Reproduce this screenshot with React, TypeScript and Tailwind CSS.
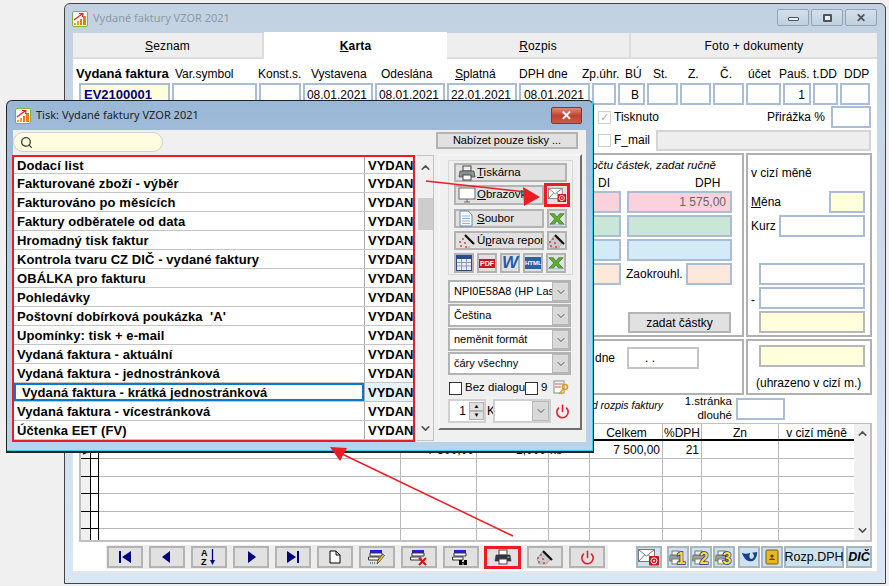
import { ChevronDown, ChevronUp, Power, Search } from 'lucide-react';

const LABELS = [
  { t: 'Var.symbol', w: 'w-[83px]' },
  { t: 'Konst.s.', w: 'w-[53px]' },
  { t: 'Vystavena', w: 'w-[70px]' },
  { t: 'Odeslána', w: 'w-[74px]' },
  { t: 'Splatná', w: 'w-[64px]', u: true },
  { t: 'DPH dne', w: 'w-[63px]' },
  { t: 'Zp.úhr.', w: 'w-[43px]' },
  { t: 'BÚ', w: 'w-[28px]' },
  { t: 'St.', w: 'w-[35px]' },
  { t: 'Z.', w: 'w-[32px]' },
  { t: 'Č.', w: 'w-[28px]' },
  { t: 'účet', w: 'w-[31px]' },
  { t: 'Pauš.', w: 'w-[34px]' },
  { t: 't.DD', w: 'w-[31px]' },
  { t: 'DDP', w: 'w-[30px]' },
];

const HEAD_INPUTS = [
  { w: 'w-[91px]', v: 'EV2100001', c: 'bg-[#ffffdc] text-[#000080] font-bold text-[13px] !justify-start pl-[3px]' },
  { w: 'w-[85px]', v: '' },
  { w: 'w-[42px]', v: '' },
  { w: 'w-[70px]', v: '08.01.2021' },
  { w: 'w-[70px]', v: '08.01.2021' },
  { w: 'w-[70px]', v: '22.01.2021' },
  { w: 'w-[71px]', v: '08.01.2021' },
  { w: 'w-[24px]', v: '' },
  { w: 'w-[27px]', v: 'B' },
  { w: 'w-[31px]', v: '' },
  { w: 'w-[31px]', v: '' },
  { w: 'w-[31px]', v: '' },
  { w: 'w-[35px]', v: '' },
  { w: 'w-[28px]', v: '1' },
  { w: 'w-[25px]', v: '' },
  { w: 'w-[30px]', v: '' },
];

const REPORTS = [
  'Dodací list',
  'Fakturované zboží - výběr',
  'Fakturováno po měsících',
  'Faktury odběratele od data',
  'Hromadný tisk faktur',
  'Kontrola tvaru CZ DIČ - vydané faktury',
  'OBÁLKA pro fakturu',
  'Pohledávky',
  "Poštovní dobírková poukázka  'A'",
  'Upomínky: tisk + e-mail',
  'Vydaná faktura - aktuální',
  'Vydaná faktura - jednostránková',
  'Vydaná faktura - krátká jednostránková',
  'Vydaná faktura - vícestránková',
  'Účtenka EET (FV)',
];

const COLS = ['w-[10px]', 'w-[8px]', 'w-[302px]', 'w-[76px]', 'w-[72px]', 'w-[41px]', 'w-[73px]', 'w-[39px]', 'w-[77px]', 'w-[75px]'];

function Logo() {
  return (
    <svg viewBox="0 0 16 16" className="w-4 h-4 shrink-0">
      <rect x="0.5" y="0.5" width="15" height="15" rx="1.5" fill="#fff" stroke="#7fb13c" />
      <rect x="2" y="12" width="2" height="2" fill="#e8a020" />
      <rect x="5" y="10" width="2" height="4" fill="#e8a020" />
      <rect x="8" y="8" width="2" height="6" fill="#e87a20" />
      <rect x="11" y="5" width="3" height="9" fill="#e87a20" />
      <path d="M2 9 L10 3 M7 2.5 L11 2.5 L10.5 6" stroke="#e02020" strokeWidth="1.2" fill="none" />
    </svg>
  );
}

function PrinterIcon({ dark = false }: { dark?: boolean }) {
  return (
    <svg viewBox="0 0 18 16" className="w-[18px] h-4 shrink-0">
      <rect x="5" y="1" width="8" height="5" fill={dark ? '#fff' : '#eee'} stroke="#444" />
      <path d="M2 6 H16 L17 12 H1 Z" fill={dark ? '#334' : '#8a8f94'} stroke="#333" strokeWidth="0.6" />
      <rect x="5" y="10" width="8" height="5" fill="#fff" stroke="#444" />
      <rect x="13.5" y="7.5" width="2" height="1.5" fill="#5c5" />
    </svg>
  );
}

function NumPrinter({ n }: { n: string }) {
  return (
    <svg viewBox="0 0 18 18" className="w-[18px] h-[18px]">
      <path d="M1 7 H12 L13 13 H0.5 Z" fill="#9a9fa4" stroke="#555" strokeWidth="0.6" />
      <rect x="3" y="3" width="7" height="4" fill="#eee" stroke="#777" />
      <rect x="3" y="11" width="7" height="5" fill="#fff" stroke="#777" />
      <text x="12" y="15.5" textAnchor="middle" fontSize="16" fontWeight="bold" fontFamily="Liberation Sans" fill="#ffe020" stroke="#1a2a90" strokeWidth="1.4" paintOrder="stroke">
        {n}
      </text>
    </svg>
  );
}

function Mail({ w = 'w-[22px]' }: { w?: string }) {
  return (
    <svg viewBox="0 0 22 18" className={w}>
      <rect x="0.5" y="1.5" width="16" height="12" fill="#fff" stroke="#777" />
      <path d="M1 2 L8.5 8 L16 2 M1 13 L6.5 7 M16 13 L10.5 7" stroke="#777" fill="none" />
      <rect x="11" y="8" width="10" height="9.5" rx="1" fill="#c8161c" />
      <circle cx="16" cy="12.8" r="3" fill="none" stroke="#fff" strokeWidth="1" />
      <circle cx="16" cy="12.8" r="1" fill="#fff" />
    </svg>
  );
}

function ExcelX() {
  return (
    <svg viewBox="0 0 18 16" className="w-[18px] h-4">
      <path d="M1 2 H6 L9 6 L12 2 H17 L11.5 8 L17 14 H12 L9 10 L6 14 H1 L6.5 8 Z" fill="#5cae35" stroke="#2c6b1a" strokeWidth="0.7" />
      <path d="M2 14.5 H16" stroke="#9bc" strokeWidth="1" />
    </svg>
  );
}

function Wand({ small = false }: { small?: boolean }) {
  return (
    <svg viewBox="0 0 18 18" className="w-[18px] h-[18px] shrink-0">
      {small && <path d="M1 11 L6 4 L14 12 L10 16 H3 Z" fill="#c8ccd2" stroke="#888" strokeWidth="0.5" />}
      <path d="M7 3 L16 12" stroke="#111" strokeWidth="2.2" />
      <g fill="#d23a2a">
        <circle cx="5" cy="7" r="0.9" />
        <circle cx="2" cy="10" r="0.9" />
        <circle cx="7" cy="11" r="0.9" />
        <circle cx="3" cy="14" r="0.9" />
        <circle cx="8" cy="15" r="0.9" />
      </g>
      <circle cx="11" cy="15" r="0.9" fill="#e8b020" />
    </svg>
  );
}

function Btn({ className, children }: { className: string; children?: React.ReactNode }) {
  return (
    <div className={`flex items-center border-2 border-[#b3b3b3] bg-[#e1e1e1] ${className}`}>{children}</div>
  );
}

function Field({ className, children }: { className: string; children?: React.ReactNode }) {
  return (
    <div className={`h-[22px] shrink-0 border-2 border-[#a9bdd6] flex items-center justify-end pr-1 overflow-hidden ${className}`}>
      {children}
    </div>
  );
}

function SelectBox({ text }: { text: string }) {
  return (
    <div className="h-[23px] border-2 border-[#b3b3b3] bg-white flex items-center pl-1 overflow-hidden">
      <span className="flex-1 whitespace-nowrap overflow-hidden text-[11px]">{text}</span>
      <div className="w-[17px] h-[19px] shrink-0 bg-[#d9d9d9] border border-[#b8b8b8] flex items-center justify-center">
        <ChevronDown className="w-3 h-3 text-[#555]" />
      </div>
    </div>
  );
}

function Tool({ children, red = false }: { children: React.ReactNode; red?: boolean }) {
  return (
    <div
      className={
        red
          ? 'w-[37px] h-[23px] border-[3px] border-[#ed1c24] bg-[#e1e1e1] flex items-center justify-center -ml-px'
          : 'w-[36px] h-[22px] border-2 border-[#b3b3b3] bg-[#e1e1e1] flex items-center justify-center'
      }
    >
      {children}
    </div>
  );
}

function Side({ className = 'w-[22px]', children }: { className?: string; children: React.ReactNode }) {
  return (
    <div className={`h-[22px] border-2 border-[#a9b6bf] bg-[#cfe3ef] flex items-center justify-center ${className}`}>
      {children}
    </div>
  );
}

function Dialog() {
  return (
    <div className="absolute left-[6px] top-[100px] w-[588px] h-[353px] border border-[#222] rounded-t-[6px] bg-gradient-to-b from-[#9ab7d6] via-[#b8d0e8] to-[#b9d3ec] border-b-2">
      <div className="h-full flex flex-col border-r border-b border-[#38cde6]">
        <div className="h-[29px] shrink-0 flex items-center pl-2 pr-[10px]">
          <Logo />
          <span className="ml-[5px] flex-1 font-['Noto_Sans'] text-[11px] text-[#222]">Tisk: Vydané faktury VZOR 2021</span>
          <div className="w-[31px] h-[17px] rounded-[2px] border border-[#7a3a30] bg-gradient-to-b from-[#dd8a78] via-[#c2402f] to-[#c85a48] flex items-center justify-center text-white font-bold text-[13px] leading-none">
            ✕
          </div>
        </div>
        <div className="ml-[6px] w-[573px] h-[312px] bg-[#f0f0f0] flex flex-col">
          <div className="h-[25px] shrink-0 flex items-start justify-between pt-[2px] pr-[8px]">
            <div className="w-[150px] h-[20px] rounded-full border border-[#cfcfcf] bg-[#fffde0] flex items-center pl-[6px]">
              <Search className="w-[13px] h-[13px] text-[#444]" strokeWidth={2.5} />
            </div>
            <Btn className="w-[142px] h-[17px] justify-center text-[11px]">Nabízet pouze tisky ...</Btn>
          </div>
          <div className="flex items-start">
            <div className="-ml-px w-[403px] h-[287px] shrink-0 border-2 border-[#ed1c24] bg-white overflow-hidden">
              {REPORTS.map((r, i) => {
                const sel = i === 12;
                return (
                  <div key={r} className={`flex border-b border-[#c4c4c4] text-[13px] font-bold leading-none ${i === 0 ? 'h-[17px]' : 'h-[19px]'}`}>
                    <div className={`w-[350px] shrink-0 flex items-center whitespace-pre tracking-[0.08px] ${sel ? 'border-2 border-[#0a78d0] pl-[6px]' : 'pl-[3px]'}`}>
                      {r}
                    </div>
                    <div className={`flex-1 border-l border-[#a8a8a8] pl-[3px] flex items-center overflow-hidden ${sel ? 'bg-[#e5f3ff]' : ''}`}>
                      VYDANÍ
                    </div>
                  </div>
                );
              })}
            </div>
            <div className="ml-px w-[18px] h-[286px] shrink-0 border border-[#c4c4c4] border-l-white bg-[#f0f0f0] flex flex-col items-center justify-between py-[5px]">
              <ChevronUp className="w-[13px] h-[13px] text-[#555]" strokeWidth={3} />
              <div className="w-[15px] h-[32px] bg-[#cdcdcd] mb-[168px]" />
              <ChevronDown className="w-[13px] h-[13px] text-[#555]" strokeWidth={3} />
            </div>
            <div className="ml-[4px] w-[144px] h-[276px] shrink-0 -mt-px border-2 border-[#f5f5f5] border-r-[#6e6e6e] border-b-[#6e6e6e] pl-[8px] pt-[4px]">
              <div className="w-[125px] h-[115px] border border-[#d8d8d8] pl-[5px] pt-[2px] flex flex-col gap-[3px] text-[11.5px]">
                <Btn className="w-[113px] h-[19px] pl-[2px] gap-px">
                  <PrinterIcon />
                  <span><u>T</u>iskárna</span>
                </Btn>
                <div className="flex h-[19px] relative">
                  <Btn className="w-[90px] h-[20px] pl-[2px] gap-px overflow-hidden whitespace-nowrap">
                    <svg viewBox="0 0 18 16" className="w-[18px] h-4 shrink-0">
                      <rect x="1" y="1" width="16" height="11" fill="#fff" stroke="#666" />
                      <path d="M6 15 H12 M9 12 V15" stroke="#666" />
                    </svg>
                    <span><u>O</u>brazovka</span>
                  </Btn>
                  <div className="absolute left-[90px] -top-[2px] w-[26px] h-[24px] border-[3px] border-[#ed1c24] bg-[#e1e1e1] flex items-center justify-center">
                    <Mail w="w-[19px]" />
                  </div>
                </div>
                <div className="flex gap-[3px] h-[19px] mt-[2px]">
                  <Btn className="w-[90px] pl-[3px] gap-[4px]">
                    <svg viewBox="0 0 14 17" className="w-[14px] h-[17px] shrink-0">
                      <path d="M1 1 H9 L13 5 V16 H1 Z" fill="#fff" stroke="#5a8ac0" />
                      <path d="M3 6 H11 M3 8.5 H11 M3 11 H11 M3 13.5 H11" stroke="#8ab4dc" />
                    </svg>
                    <span><u>S</u>oubor</span>
                  </Btn>
                  <Btn className="w-[20px] justify-center"><ExcelX /></Btn>
                </div>
                <div className="flex gap-[3px] h-[19px]">
                  <Btn className="w-[90px] pl-[2px] gap-px overflow-hidden whitespace-nowrap">
                    <Wand />
                    <span>Ú<u>p</u>rava report</span>
                  </Btn>
                  <Btn className="w-[20px] justify-center"><Wand small /></Btn>
                </div>
                <div className="flex gap-[3px] h-[20px]">
                  <Btn className="w-[20px] justify-center">
                    <svg viewBox="0 0 16 16" className="w-4 h-4">
                      <rect x="0.5" y="0.5" width="15" height="15" fill="#e8eef8" stroke="#2a4a8a" />
                      <rect x="1" y="1" width="14" height="3" fill="#2a4a8a" />
                      <path d="M1 7.5 H15 M1 11 H15 M5.5 4 V15 M10.5 4 V15" stroke="#8a9ab8" />
                    </svg>
                  </Btn>
                  <Btn className="w-[20px] justify-center">
                    <div className="w-[16px] h-[9px] bg-[#c8161c] text-white text-[7px] leading-[9px] font-bold text-center">PDF</div>
                  </Btn>
                  <Btn className="w-[20px] justify-center font-bold italic text-[#1f5cb0] text-[17px]">W</Btn>
                  <Btn className="w-[20px] justify-center">
                    <div className="w-[16px] h-[12px] bg-[#2f5faa] text-white text-[6px] leading-[12px] font-bold text-center">HTML</div>
                  </Btn>
                  <Btn className="w-[20px] justify-center"><ExcelX /></Btn>
                </div>
              </div>
              <div className="mt-[5px] w-[123px] flex flex-col gap-px">
                <SelectBox text="NPI0E58A8 (HP LaserJet)" />
                <SelectBox text="Čeština" />
                <SelectBox text="neměnit formát" />
                <SelectBox text="čáry všechny" />
              </div>
              <div className="mt-[3px] flex items-center h-[20px] text-[11.5px] pl-px">
                <div className="w-[13px] h-[13px] border border-[#333] bg-white shrink-0" />
                <span className="ml-[3px] w-[60px] whitespace-nowrap">Bez dialogu</span>
                <div className="w-[13px] h-[13px] border border-[#333] bg-white shrink-0" />
                <span className="ml-[3px]">9</span>
                <svg viewBox="0 0 16 16" className="ml-[6px] w-4 h-4">
                  <rect x="1" y="1" width="10" height="12" fill="#fff" stroke="#888" />
                  <path d="M2 4 H10 M2 7 H8" stroke="#c55" />
                  <circle cx="12" cy="7" r="2.5" fill="none" stroke="#d8a020" strokeWidth="1.5" />
                  <path d="M10.5 9 L6 14 M7.5 12.5 L9 14" stroke="#d8a020" strokeWidth="1.5" />
                </svg>
              </div>
              <div className="mt-[1px] flex items-center h-[24px] text-[12px]">
                <div className="w-[38px] h-[24px] border-2 border-[#d0d0d0] bg-white flex items-center">
                  <span className="w-[16px] text-right">1</span>
                  <div className="ml-[3px] w-[15px] flex flex-col">
                    <div className="h-[9px] bg-[#e1e1e1] border border-[#b3b3b3] text-[6px] leading-[7px] text-center">▲</div>
                    <div className="h-[9px] bg-[#e1e1e1] border border-[#b3b3b3] text-[6px] leading-[7px] text-center">▼</div>
                  </div>
                </div>
                <span className="ml-px w-[6px] overflow-hidden">K</span>
                <div className="w-[58px] h-[24px] border-2 border-[#d0d0d0] bg-white flex justify-end items-center">
                  <div className="w-[17px] h-[20px] bg-[#d9d9d9] border border-[#b8b8b8] flex items-center justify-center">
                    <ChevronDown className="w-3 h-3 text-[#555]" />
                  </div>
                </div>
                <Power className="ml-[4px] w-[15px] h-[15px] text-[#e0202a]" strokeWidth={2.5} />
              </div>
            </div>
          </div>
        </div>
      </div>
    </div>
  );
}

export default function App() {
  return (
    <div className="relative w-[889px] h-[586px] overflow-hidden bg-[#f0f0f0] pt-[3px] pl-[64px] font-['Liberation_Sans',sans-serif] text-[12px] text-black">
      <div className="w-[822px] h-[581px] border border-[#444] rounded-t-[6px] bg-gradient-to-b from-[#c3d2e2] to-[#d9e6f3] px-[8px] flex flex-col">
        <div className="h-[29px] shrink-0 flex items-center">
          <div className="-ml-[1px]"><Logo /></div>
          <span className="ml-[5px] flex-1 font-['Noto_Sans'] text-[11px] text-[#8d99a5]">Vydané faktury VZOR 2021</span>
          <div className="flex gap-[2px] -mt-[2px]">
            <div className="w-[32px] h-[17px] rounded-[2px] border border-[#93a3b4] bg-gradient-to-b from-[#d4dfeb] to-[#c2d0de] flex items-center justify-center pt-[2px]">
              <div className="w-[11px] h-[4px] rounded-[1px] border border-[#4a5560] bg-[#e8eef4]" />
            </div>
            <div className="w-[32px] h-[17px] rounded-[2px] border border-[#93a3b4] bg-gradient-to-b from-[#d4dfeb] to-[#c2d0de] flex items-center justify-center">
              <div className="w-[9px] h-[8px] rounded-[1px] border-2 border-[#4a5560] bg-[#e8eef4]" />
            </div>
            <div className="w-[32px] h-[17px] rounded-[2px] border border-[#93a3b4] bg-gradient-to-b from-[#d4dfeb] to-[#c2d0de] flex items-center justify-center text-[#4a5560] font-bold text-[12px] leading-none">
              ✕
            </div>
          </div>
        </div>

        <div className="w-[804px] h-[540px] bg-white flex flex-col border-b-2 border-[#e6e6e6]">
          {/* tabs */}
          <div className="h-[26px] shrink-0 flex text-[12px] tracking-[0.15px]">
            <div className="w-[191px] bg-[#eeeeee] border-r-2 border-b-2 border-[#dcdcdc] flex items-center justify-center pt-px"><span><u>S</u>eznam</span></div>
            <div className="w-[183px] bg-white flex items-center justify-center font-bold -mt-[1px]"><span><u>K</u>arta</span></div>
            <div className="w-[184px] bg-[#eeeeee] border-r-2 border-b-2 border-[#dcdcdc] flex items-center justify-center pt-px"><span><u>R</u>ozpis</span></div>
            <div className="flex-1 bg-[#eeeeee] border-b-2 border-[#dcdcdc] flex items-center justify-center pt-px">Foto + dokumenty</div>
          </div>

          {/* head fields */}
          <div className="h-[24px] flex items-center pt-[5px] pl-[3px] whitespace-nowrap">
            <span className="w-[99px] font-bold text-[13px]">Vydaná faktura</span>
            {LABELS.map((l) => (
              <span key={l.t} className={l.w}>
                {l.u ? <><u>S</u>platná</> : l.t}
              </span>
            ))}
          </div>
          <div className="flex gap-[2px] pl-[6px] h-[22px]">
            {HEAD_INPUTS.map((f, i) => (
              <Field key={i} className={`pt-[2px] ${f.w} ${f.c ?? ''}`}>{f.v}</Field>
            ))}
          </div>

          {/* checkboxes */}
          <div className="h-[24px] pl-[525px] pr-[6px] flex items-center">
            <div className="w-[13px] h-[13px] border border-[#cfcfcf] text-[#b0b0b0] text-[11px] leading-[11px] text-center">✓</div>
            <span className="ml-[3px] flex-1">Tisknuto</span>
            <span className="mr-[6px]">Přirážka %</span>
            <Field className="w-[40px] bg-white" />
          </div>
          <div className="h-[22px] pl-[525px] pr-[6px] flex items-center">
            <div className="w-[13px] h-[13px] border border-[#cfcfcf]" />
            <span className="ml-[3px] w-[42px]">F_mail</span>
            <div className="flex-1 h-[21px] border-2 border-[#d4d4d4] bg-[#eeeeee]" />
          </div>

          {/* amount panels */}
          <div className="mt-[2px] pl-[6px] flex gap-[2px] h-[184px]">
            <div className="w-[665px] border-2 border-[#b0b0b0] border-l-[#d0d0d0] flex flex-col items-end pr-[10px]">
              <div className="h-[22px] pr-[16px] flex items-center italic text-[11.5px]">Bez přepočtu částek, zadat ručně</div>
              <div className="h-[12px] flex items-center">
                <span className="w-[97px]">DI</span>
                <span className="w-[26px] mr-[11px]">DPH</span>
              </div>
              <div className="mt-[2px] flex flex-col gap-[2px]">
                <div className="flex gap-[6px]">
                  <Field className="w-[80px] bg-[#fbd2dc]" />
                  <Field className="w-[105px] bg-[#fbd2dc] text-[#666]">1 575,00</Field>
                </div>
                <div className="flex gap-[6px]">
                  <Field className="w-[80px] bg-[#c9e6d7]" />
                  <Field className="w-[105px] bg-[#c9e6d7]" />
                </div>
                <div className="flex gap-[6px]">
                  <Field className="w-[80px] bg-[#d3ebf7]" />
                  <Field className="w-[105px] bg-[#d3ebf7]" />
                </div>
                <div className="flex gap-[5px] items-center">
                  <Field className="w-[80px] bg-[#fde8d9]" />
                  <span className="w-[55px] whitespace-nowrap">Zaokrouhl.</span>
                  <Field className="w-[46px] bg-[#fde8d9]" />
                </div>
              </div>
              <Btn className="mt-[27px] mr-px w-[103px] h-[21px] justify-center">zadat částky</Btn>
            </div>
            <div className="w-[126px] border-2 border-[#b0b0b0] flex flex-col pl-[3px]">
              <div className="h-[32px] flex items-center pt-[4px]">v cizí měně</div>
              <div className="mt-[4px] flex items-center h-[22px] justify-between pr-[5px]">
                <span><u>M</u>ěna</span>
                <Field className="w-[36px] bg-[#ffffdc]" />
              </div>
              <div className="mt-[2px] flex items-center h-[22px] justify-between pr-[5px]">
                <span>Kurz</span>
                <Field className="w-[86px]" />
              </div>
              <div className="mt-[26px] pl-[8px] pr-[5px] flex flex-col gap-[2px]">
                <Field className="w-[106px]" />
                <div className="relative">
                  <span className="absolute -left-[8px] top-[4px]">-</span>
                  <Field className="w-[106px]" />
                </div>
                <Field className="w-[106px] bg-[#ffffdc] border-[#b8b8b8]" />
              </div>
            </div>
          </div>

          <div className="mt-[2px] pl-[6px] flex gap-[2px] h-[56px]">
            <div className="w-[665px] border-2 border-[#b0b0b0] border-l-[#d0d0d0] flex items-center pl-[514px]">
              <span className="w-[32px] -mt-[18px]">dne</span>
              <div className="w-[72px] h-[22px] -mt-[18px] border-2 border-[#c4c4c4] pl-[16px] flex items-center">. .</div>
            </div>
            <div className="w-[126px] border-2 border-[#b0b0b0] flex flex-col pl-[11px] pt-[4px]">
              <Field className="w-[106px] bg-[#ffffdc] border-[#b8b8b8]" />
              <span className="-ml-[3px] mt-[7px] whitespace-nowrap">(uhrazeno v cizí m.)</span>
            </div>
          </div>

          {/* table heading */}
          <div className="h-[27px] pl-[490px] flex items-center text-[11.5px]">
            <span className="w-[100px] text-right italic text-[10.5px] -mt-[5px] whitespace-nowrap">pod rozpis faktury</span>
            <div className="w-[69px] text-right leading-[14px] -mt-px">
              1.stránka
              <br />
              dlouhé
            </div>
            <Field className="ml-[4px] w-[49px] mt-[1px]" />
          </div>

          {/* table */}
          <div className="mt-px ml-[6px] w-[793px] h-[119px] border-2 border-[#c0c0c0] border-t-[1px] flex">
            <div className="w-[773px] flex flex-col">
              <div className="h-[17px] shrink-0 flex border-b-2 border-black">
                {['', '', '', '', '', '', 'Celkem', '%DPH', 'Zn', 'v cizí měně'].map((h, i) => (
                  <div key={i} className={`${COLS[i]} shrink-0 text-center ${i > 5 && i < 9 ? 'border-r border-[#b9b9b9]' : ''} ${i === 6 ? 'border-l border-[#b9b9b9]' : ''}`}>
                    {h}
                  </div>
                ))}
              </div>
              {[0, 1, 2, 3, 4, 5].map((r) => (
                <div key={r} className={`flex ${r === 5 ? 'h-[11px]' : 'h-[18px]'}`}>
                  {COLS.map((c, i) => (
                    <div
                      key={c + i}
                      className={`${c} shrink-0 text-right pr-[2px] leading-[18px] overflow-hidden ${
                        i === 0 ? 'bg-[#f0f0f0] border-r border-black' : i === 1 ? 'border-r border-black' : 'border-r border-[#b9b9b9]'
                      } ${i === 9 ? 'border-r-0' : ''} ${r === 5 ? '' : i < 2 ? 'border-b border-b-black' : 'border-b border-b-[#b9b9b9]'}`}
                    >
                      {r === 0 && i === 0 ? <span className="text-[7px] leading-[16px]">▶</span> : null}
                      {r === 0 && i === 3 ? '7 500,00' : null}
                      {r === 0 && i === 4 ? '1,000' : null}
                      {r === 0 && i === 5 ? <span className="block text-left pl-px">ks</span> : null}
                      {r === 0 && i === 6 ? '7 500,00' : null}
                      {r === 0 && i === 7 ? '21' : null}
                    </div>
                  ))}
                </div>
              ))}
            </div>
            <div className="w-[16px] bg-[#f0f0f0] flex flex-col items-center justify-between py-[3px]">
              <ChevronUp className="w-[13px] h-[13px] text-[#555]" strokeWidth={3} />
              <ChevronDown className="w-[13px] h-[13px] text-[#555]" strokeWidth={3} />
            </div>
          </div>

          {/* bottom toolbar */}
          <div className="mt-[3px] flex items-start">
            <div className="ml-[33px] w-[502px] h-[24px] bg-[#ededed] flex items-center gap-[6px] pl-px">
              <Tool><svg viewBox="0 0 14 14" className="w-[14px] h-[14px]"><path d="M1 1 H3 V13 H1 Z M13 1 V13 L4 7 Z" fill="#000080" /></svg></Tool>
              <Tool><svg viewBox="0 0 14 14" className="w-[14px] h-[14px]"><path d="M10 1 V13 L2 7 Z" fill="#000080" /></svg></Tool>
              <Tool>
                <svg viewBox="0 0 18 18" className="w-[18px] h-[18px]">
                  <text x="1" y="8" fontSize="9" fontWeight="bold" fontFamily="Liberation Sans">A</text>
                  <text x="1" y="17" fontSize="9" fontWeight="bold" fontFamily="Liberation Sans">Z</text>
                  <path d="M12.5 1 V13" stroke="#000080" strokeWidth="1.3" />
                  <path d="M10 12 H15 L12.5 17 Z" fill="#000080" />
                </svg>
              </Tool>
              <Tool><svg viewBox="0 0 14 14" className="w-[14px] h-[14px]"><path d="M4 1 V13 L12 7 Z" fill="#000080" /></svg></Tool>
              <Tool><svg viewBox="0 0 14 14" className="w-[14px] h-[14px]"><path d="M1 1 V13 L10 7 Z M11 1 H13 V13 H11 Z" fill="#000080" /></svg></Tool>
              <Tool><svg viewBox="0 0 12 14" className="w-[12px] h-[14px]"><path d="M1 1 H7 L11 5 V13 H1 Z M7 1 V5 H11" fill="#fff" stroke="#000" /></svg></Tool>
              <Tool>
                <svg viewBox="0 0 18 17" className="w-[18px] h-[17px]">
                  <rect x="2" y="1" width="12" height="3" fill="#2020e0" />
                  <path d="M2 4 H14 V7 H2 Z M0.5 8 H11 V11 H0.5 Z" fill="#fff" stroke="#333" />
                  <path d="M2 14 H8" stroke="#333" strokeDasharray="1 1" />
                  <path d="M9 15 L10 11 L15 5 L16.5 6.5 L11.5 12.5 Z" fill="#f0c020" stroke="#222" strokeWidth="0.6" />
                </svg>
              </Tool>
              <Tool>
                <svg viewBox="0 0 18 17" className="w-[18px] h-[17px]">
                  <rect x="2" y="1" width="12" height="3" fill="#2020e0" />
                  <path d="M2 4 H14 V7 H2 Z M0.5 8 H11 V11 H0.5 Z" fill="#fff" stroke="#333" />
                  <path d="M9 9 L16 16 M16 9 L9 16" stroke="#e01010" strokeWidth="2" />
                </svg>
              </Tool>
              <Tool>
                <svg viewBox="0 0 18 17" className="w-[18px] h-[17px]">
                  <rect x="2" y="1" width="12" height="3" fill="#2020e0" />
                  <path d="M2 4 H14 V7 H2 Z M0.5 8 H11 V11 H0.5 Z" fill="#fff" stroke="#333" />
                  <path d="M7 16 V11 H10 V13 H12 V11 H15 V16 H11.5 V14 H10.5 V16 Z" fill="#000" />
                </svg>
              </Tool>
              <Tool red><PrinterIcon dark /></Tool>
              <Tool><Wand small /></Tool>
              <Tool><Power className="w-[15px] h-[15px] text-[#e0202a]" strokeWidth={2.5} /></Tool>
            </div>
            <div className="ml-[28px] mt-px flex items-center">
              <Side className="w-[26px] mr-[5px]"><Mail /></Side>
              <div className="flex gap-px">
                <Side><NumPrinter n="1" /></Side>
                <Side><NumPrinter n="2" /></Side>
                <Side><NumPrinter n="3" /></Side>
                <Side className="ml-[2px] w-[22px]">
                  <svg viewBox="0 0 20 14" className="w-[17px] h-[14px]">
                    <path d="M1 2 C5 4 8 3 11 2 C9 6 10 10 13 9 C16 8 16 4 13 2 L19 1 C19 8 15 13 10 12 C5 11 3 7 1 2 Z" fill="#1a3d8f" />
                  </svg>
                </Side>
                <Side>
                  <svg viewBox="0 0 14 16" className="w-[14px] h-4">
                    <rect x="1" y="1" width="12" height="14" rx="1" fill="#e8b820" stroke="#7a5a10" />
                    <circle cx="7" cy="7" r="1.6" fill="#5a4010" />
                    <path d="M4 11 C4 9 10 9 10 11 Z" fill="#5a4010" />
                  </svg>
                </Side>
                <Side className="w-[60px] text-[12.5px] whitespace-nowrap">Rozp.DPH</Side>
                <Side className="ml-px w-[26px] font-bold italic text-[12.5px]">DIČ</Side>
              </div>
            </div>
          </div>
        </div>
      </div>

      <Dialog />

      <svg viewBox="0 0 889 586" className="absolute inset-0 w-[889px] h-[586px] pointer-events-none">
        <path d="M426 181 L526 192" stroke="#ed1c24" strokeWidth="1.5" />
        <path d="M540 197 L523 187 L524 206 Z" fill="#ed1c24" />
        <path d="M513 536 L340 453" stroke="#ed1c24" strokeWidth="1.5" />
        <path d="M330 447 L347 448 L340 461 Z" fill="#ed1c24" />
      </svg>
    </div>
  );
}
